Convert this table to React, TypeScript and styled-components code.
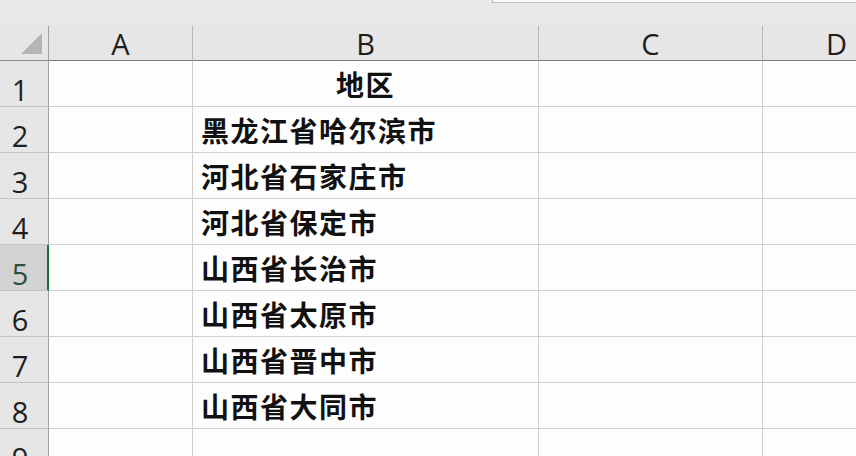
import React from "react";
import styled, { createGlobalStyle } from "styled-components";

const Global = createGlobalStyle`
  html, body { margin: 0; padding: 0; background: #ffffff; overflow: hidden; }
  * { box-sizing: border-box; }
`;

const Page = styled.div`
  width: 856px;
  height: 456px;
  overflow: hidden;
  background: #fdfdfd;
  display: flex;
  flex-direction: column;
`;

const TopStrip = styled.div`
  height: 26px;
  flex: none;
  background: #e8e8e8;
  display: flex;
  align-items: flex-start;
  padding-left: 492px;
`;

const FormulaBox = styled.div`
  flex: 1;
  height: 3px;
  background: #fafafa;
  border-left: 1px solid #bdbdbd;
  border-bottom: 1px solid #bdbdbd;
`;

const Grid = styled.div`
  display: grid;
  grid-template-columns: 49px 144px 346px 224px 148px;
  grid-template-rows: 35px repeat(9, 46px);
  width: 911px;
`;

const Corner = styled.div`
  background: #e6e6e6;
  border-right: 1px solid #a0a0a0;
  border-bottom: 1px solid #8a8a8a;
  display: flex;
  align-items: flex-end;
  justify-content: flex-end;
  padding: 0 6px 6px 0;
`;

const ColHead = styled.div`
  background: #e6e6e6;
  border-right: 1px solid #b8b8b8;
  border-bottom: 1px solid #7a7a7a;
  display: flex;
  align-items: flex-end;
  justify-content: center;
  font-family: "Open Sans", "Noto Sans", sans-serif;
  font-size: 29px;
  line-height: 1;
  color: #1e1e1e;
  padding-bottom: 2px;
`;

const RowHead = styled.div<{ $active?: boolean }>`
  background: ${(p) => (p.$active ? "#d3d3d3" : "#e6e6e6")};
  border-right: ${(p) => (p.$active ? "2px solid #1e6b3e" : "1px solid #a0a0a0")};
  border-bottom: 1px solid #c4c4c4;
  display: flex;
  align-items: flex-end;
  justify-content: center;
  padding: 0 ${(p) => (p.$active ? "7px" : "8px")} 2px 0;
  font-family: "Open Sans", "Noto Sans", sans-serif;
  font-size: 29px;
  line-height: 1;
  color: ${(p) => (p.$active ? "#2f4f3e" : "#1e1e1e")};
`;

const Cell = styled.div<{ $center?: boolean }>`
  background: #fdfdfd;
  border-right: 1px solid #d0d0d0;
  border-bottom: 1px solid #d0d0d0;
  display: flex;
  align-items: center;
  justify-content: ${(p) => (p.$center ? "center" : "flex-start")};
  padding-left: ${(p) => (p.$center ? "0" : "8px")};
  font-family: "Noto Sans CJK SC", "Noto Sans", sans-serif;
  font-weight: 700;
  font-size: 28px;
  letter-spacing: 1.5px;
  color: #111;
  white-space: nowrap;
  overflow: hidden;
`;

const cols = ["A", "B", "C", "D"];
const data: string[] = [
  "地区",
  "黑龙江省哈尔滨市",
  "河北省石家庄市",
  "河北省保定市",
  "山西省长治市",
  "山西省太原市",
  "山西省晋中市",
  "山西省大同市",
  "",
];

export default function App() {
  return (
    <>
      <Global />
      <Page>
        <TopStrip>
          <FormulaBox />
        </TopStrip>
        <Grid>
          <Corner>
            <svg width="21" height="21" viewBox="0 0 21 21">
              <polygon points="21,0 21,21 0,21" fill="#b5b5b5" />
            </svg>
          </Corner>
          {cols.map((c) => (
            <ColHead key={c}>{c}</ColHead>
          ))}
          {data.map((v, i) => (
            <React.Fragment key={i}>
              <RowHead $active={i === 4}>{i + 1}</RowHead>
              <Cell />
              <Cell $center={i === 0}>{v}</Cell>
              <Cell />
              <Cell />
            </React.Fragment>
          ))}
        </Grid>
      </Page>
    </>
  );
}
